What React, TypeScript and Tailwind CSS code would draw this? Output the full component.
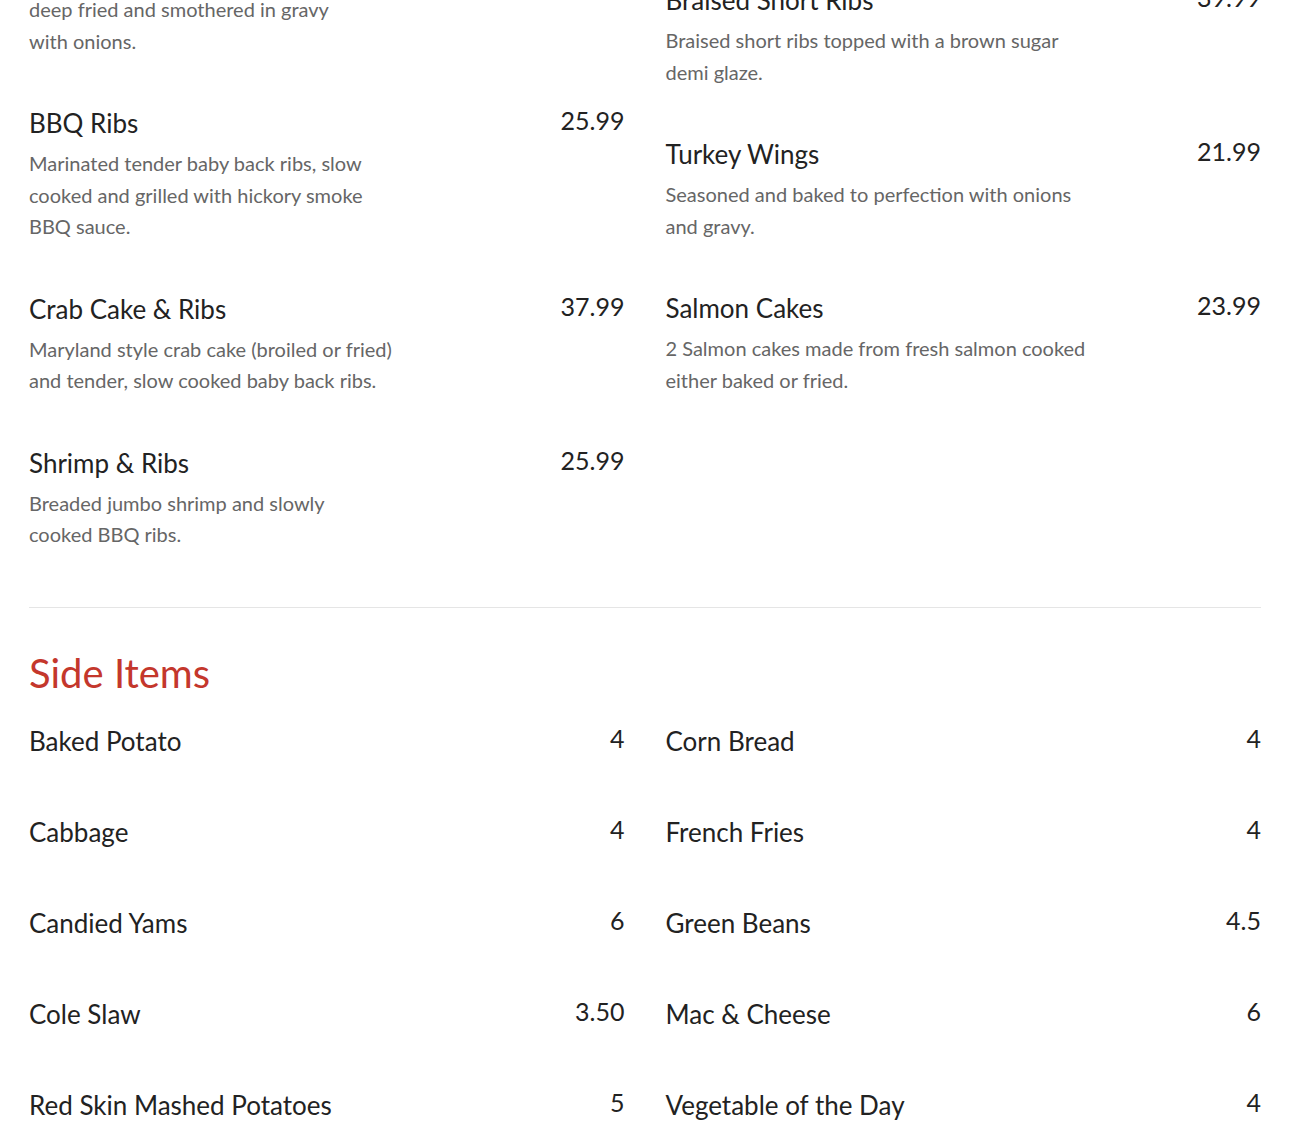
const leftItems = [
  {
    name: 'BBQ Ribs',
    price: '25.99',
    lines: ['Marinated tender baby back ribs, slow', 'cooked and grilled with hickory smoke', 'BBQ sauce.'],
  },
  {
    name: 'Crab Cake & Ribs',
    price: '37.99',
    lines: ['Maryland style crab cake (broiled or fried)', 'and tender, slow cooked baby back ribs.'],
  },
  {
    name: 'Shrimp & Ribs',
    price: '25.99',
    lines: ['Breaded jumbo shrimp and slowly', 'cooked BBQ ribs.'],
  },
]

const rightItems = [
  {
    name: 'Braised Short Ribs',
    price: '39.99',
    lines: ['Braised short ribs topped with a brown sugar', 'demi glaze.'],
  },
  {
    name: 'Turkey Wings',
    price: '21.99',
    lines: ['Seasoned and baked to perfection with onions', 'and gravy.'],
  },
  {
    name: 'Salmon Cakes',
    price: '23.99',
    lines: ['2 Salmon cakes made from fresh salmon cooked', 'either baked or fried.'],
  },
]

const sidesLeft = [
  { name: 'Baked Potato', price: '4' },
  { name: 'Cabbage', price: '4' },
  { name: 'Candied Yams', price: '6' },
  { name: 'Cole Slaw', price: '3.50' },
  { name: 'Red Skin Mashed Potatoes', price: '5' },
]

const sidesRight = [
  { name: 'Corn Bread', price: '4' },
  { name: 'French Fries', price: '4' },
  { name: 'Green Beans', price: '4.5' },
  { name: 'Mac & Cheese', price: '6' },
  { name: 'Vegetable of the Day', price: '4' },
]

function Description({ lines }: { lines: string[] }) {
  return (
    <p className="text-[20px] leading-[31.5px] text-[#666666] whitespace-nowrap">
      {lines.map((line) => (
        <span key={line} className="block">
          {line}
        </span>
      ))}
    </p>
  )
}

function MenuItem({ name, price, lines }: { name: string; price: string; lines: string[] }) {
  return (
    <div className="mb-[50px]">
      <div className="flex items-start justify-between">
        <h3 className="text-[26px] leading-[32px] text-[#222222]">{name}</h3>
        <span className="text-[25px] leading-[26px] text-[#222222]">{price}</span>
      </div>
      <div className="mt-[9px]">
        <Description lines={lines} />
      </div>
    </div>
  )
}

function SideItem({ name, price }: { name: string; price: string }) {
  return (
    <div className="flex items-start justify-between mb-[59px]">
      <h3 className="text-[26px] leading-[32px] text-[#222222]">{name}</h3>
      <span className="text-[25px] leading-[26px] text-[#222222]">{price}</span>
    </div>
  )
}

export default function App() {
  return (
    <div
      className="bg-white min-h-screen px-[29px] overflow-hidden"
      style={{ fontFamily: 'Lato, "Noto Sans", sans-serif' }}
    >
      <div className="grid grid-cols-2 gap-x-[41px]">
        <div className="-mt-[6px]">
          <div className="mb-[50px]">
            <Description lines={['deep fried and smothered in gravy', 'with onions.']} />
          </div>
          {leftItems.map((item) => (
            <MenuItem key={item.name} {...item} />
          ))}
        </div>
        <div className="-mt-[16px]">
          {rightItems.map((item) => (
            <MenuItem key={item.name} {...item} />
          ))}
        </div>
      </div>

      <div className="mt-[6px] border-t border-[#e5e5e5]" />

      <h2 className="mt-[41px] text-[40px] leading-[48px] text-[#c4372c]">Side Items</h2>

      <div className="mt-[28px] grid grid-cols-2 gap-x-[41px]">
        <div>
          {sidesLeft.map((item) => (
            <SideItem key={item.name} {...item} />
          ))}
        </div>
        <div>
          {sidesRight.map((item) => (
            <SideItem key={item.name} {...item} />
          ))}
        </div>
      </div>
    </div>
  )
}
